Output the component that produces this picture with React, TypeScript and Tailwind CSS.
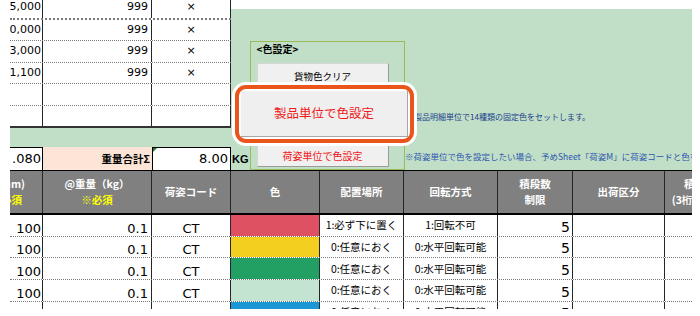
const JP = "font-['Noto_Sans_CJK_JP',sans-serif]";
const NUM = "font-['DejaVu_Sans','Noto_Sans_CJK_JP',sans-serif]";
const GRID = "grid grid-cols-[33px_109px_79px_89px_84px_94px_75px_92px_60px]";
const LINE = "border-r border-[#262626]";

const topRows = [
  { qty: "15,000", max: "999", mark: "×" },
  { qty: "10,000", max: "999", mark: "×" },
  { qty: "13,000", max: "999", mark: "×" },
  { qty: "11,100", max: "999", mark: "×" },
  { qty: "", max: "", mark: "" },
  { qty: "", max: "", mark: "" },
];

const rows = [
  { swatch: "bg-[#de5163]", place: "1:必ず下に置く", rot: "1:回転不可" },
  { swatch: "bg-[#f3d01f]", place: "0:任意におく", rot: "0:水平回転可能" },
  { swatch: "bg-[#22a064]", place: "0:任意におく", rot: "0:水平回転可能" },
  { swatch: "bg-[#c3e4d0]", place: "0:任意におく", rot: "0:水平回転可能" },
  { swatch: "bg-[#1c97d6]", place: "0:任意におく", rot: "0:水平回転可能" },
];

function SheetButton({ className = "", children }: { className?: string; children: React.ReactNode }) {
  return (
    <div
      className={`w-[132px] flex items-center justify-center bg-[#f0f0f0] border border-[#d6d6d6] border-r-[#9a9a9a] border-b-[#9a9a9a] ${className}`}
    >
      {children}
    </div>
  );
}

function LeftBlock() {
  return (
    <div className="w-[221px] shrink-0 flex flex-col">
      <div className="h-[126px] overflow-hidden">
        <div className="-mt-[4px]">
          {topRows.map((r, i) => (
            <div
              key={i}
              className={`grid grid-cols-[33px_109px_79px] border-dotted border-[#7a7a7a] ${i === 0 ? "h-[23.5px] border-b-2" : "h-[21.5px] border-b"}`}
            >
              <div className={`${LINE} ${NUM} flex items-center justify-end pr-[1px] text-[11px] whitespace-nowrap overflow-hidden`}>
                {r.qty}
              </div>
              <div className={`${LINE} ${NUM} flex items-center justify-end pr-[3px] text-[11px]`}>{r.max}</div>
              <div className={`${LINE} ${NUM} flex items-center justify-center text-[11px]`}>{r.mark}</div>
            </div>
          ))}
        </div>
      </div>
      <div className="h-[2px] bg-[#333]" />
      <div className="h-[19px] bg-[#c0dfc6]" />
      <div className="h-[23px] grid grid-cols-[33px_109px_79px]">
        <div className={`${NUM} bg-white border-t border-r border-black flex items-center justify-end pr-[1px] text-[13px]`}>
          .080
        </div>
        <div className="bg-[#fce4d6] flex items-center justify-end pr-[2px] text-[10.5px] font-bold">重量合計Σ</div>
        <div className={`${NUM} relative bg-white border-t border-l border-r border-black flex items-center justify-end pr-[2px] text-[13px]`}>
          <span className="absolute top-0 left-0 w-0 h-0 border-t-[4px] border-r-[4px] border-t-[#1e7b34] border-r-transparent" />
          8.00
        </div>
      </div>
    </div>
  );
}

function ColorPanel() {
  return (
    <div className="w-[461px] shrink-0 flex flex-col">
      <div className="h-[9px] bg-white" />
      <div className="flex-1 flex bg-[#c0dfc6]">
        <div className="w-[19px] shrink-0 flex items-end pb-[4px] pl-[1px] font-['Liberation_Sans',sans-serif] font-bold text-[11px] leading-[13px]">
          KG
        </div>
        <div className="mt-[32px] w-[155px] h-[129px] shrink-0 border-[1.5px] border-[#9bbb59] flex flex-col pl-[5.5px]">
          <div className="mt-[1px] text-[10px] leading-[12px] font-bold">&lt;色設定&gt;</div>
          <SheetButton className="mt-[8px] h-[26px] text-[9.5px]">貨物色クリア</SheetButton>
          <SheetButton className="mt-[15px] h-[26px] text-[10px] text-[#f01818]">製品単位で色設定</SheetButton>
          <SheetButton className="mt-[14px] h-[23px] text-[10px] text-[#f01818]">荷姿単位で色設定</SheetButton>
        </div>
        <div className="flex-1 min-w-0 flex flex-col leading-[11px] whitespace-nowrap">
          <p className="mt-[102px] pl-[9px] text-[8px] text-[#23408e]">製品明細単位で14種類の固定色をセットします。</p>
          <p className="mt-[28.5px] text-[8.5px] text-[#2f56b0]">
            ※荷姿単位で色を設定したい場合、予めSheet「荷姿M」に荷姿コードと色を登録して下さい。
          </p>
        </div>
      </div>
    </div>
  );
}

function HeaderRow() {
  const cell = `${LINE} flex flex-col items-center justify-center leading-[16px]`;
  return (
    <div className={`${GRID} h-[45px] border-t border-b-2 border-black bg-[#808080] text-white font-bold text-[10.5px] whitespace-nowrap`}>
      <div className={`${LINE} flex flex-col items-end justify-center leading-[16px] overflow-hidden`}>
        <span className="pr-[17px]">奥行(mm)</span>
        <span className="pr-[20px] text-[#ffff00]">※必須</span>
      </div>
      <div className={cell}>
        <span>@重量（kg）</span>
        <span className="text-[#ffff00]">※必須</span>
      </div>
      <div className={cell}>荷姿コード</div>
      <div className={cell}>色</div>
      <div className={cell}>配置場所</div>
      <div className={cell}>回転方式</div>
      <div className={cell}>
        <span>積段数</span>
        <span>制限</span>
      </div>
      <div className={cell}>出荷区分</div>
      <div className={cell}>
        <span>積載</span>
        <span>(3桁以内)</span>
      </div>
    </div>
  );
}

function Callout() {
  return (
    <div className="absolute left-[222px] top-[82px] w-[185px] h-[64px] rounded-[14px] bg-white p-[3px]">
      <div className="h-full rounded-[11px] border-[4px] border-[#e9551b] bg-white p-[2px]">
        <div className="h-full flex items-center justify-center bg-[#efefef] border-r border-b border-[#a6a6a6] text-[12.5px] text-[#f01818]">
          製品単位で色設定
        </div>
      </div>
    </div>
  );
}

export default function App() {
  return (
    <div className={`w-[700px] h-[316px] overflow-hidden bg-white text-black ${JP}`}>
      <div className="relative ml-[10px] w-[682px] h-[309px] overflow-hidden">
        <div className="flex h-[170px]">
          <LeftBlock />
          <ColorPanel />
        </div>
        <HeaderRow />
        {rows.map((r, i) => (
          <div key={i} className={`${GRID} h-[21.67px] border-b border-dotted border-[#7a7a7a]`}>
            <div className={`${LINE} ${NUM} flex items-end justify-end pr-[1px] text-[13px] leading-[14px]`}>100</div>
            <div className={`${LINE} ${NUM} flex items-end justify-end pr-[3px] text-[13px] leading-[14px]`}>0.1</div>
            <div className={`${LINE} ${NUM} flex items-end justify-center text-[13px] leading-[14px]`}>CT</div>
            <div className={`${LINE} ${r.swatch}`} />
            <div className={`${LINE} flex items-center justify-center text-[10.5px] leading-[14px]`}>{r.place}</div>
            <div className={`${LINE} flex items-center justify-center text-[10.5px] leading-[14px]`}>{r.rot}</div>
            <div className={`${LINE} ${NUM} flex items-end justify-end pr-[2px] pb-[2px] text-[14px] leading-[14px]`}>5</div>
            <div className={LINE} />
            <div className={LINE} />
          </div>
        ))}
        <Callout />
      </div>
    </div>
  );
}
